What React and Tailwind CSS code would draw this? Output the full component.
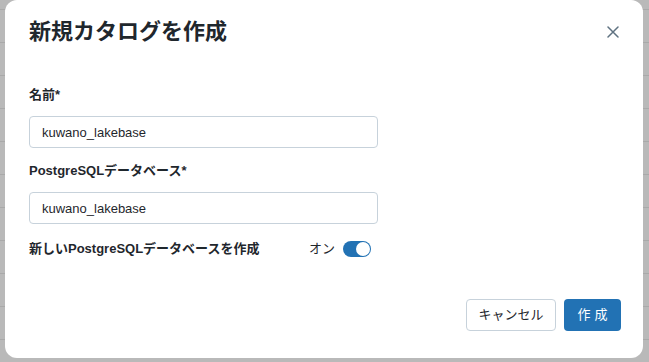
import { useState } from 'react';

const ROWS = Array.from({ length: 12 }, (_, i) => i);

function CloseIcon() {
  return (
    <svg width="12" height="12" viewBox="0 0 12 12" fill="none">
      <path d="M1 1L11 11M11 1L1 11" stroke="#5f7281" strokeWidth="1.5" strokeLinecap="round" />
    </svg>
  );
}

function Field({ label, value }) {
  return (
    <div>
      <label className="block h-5 leading-5 text-[13px] font-bold text-[#1f272d]">{label}</label>
      <input
        readOnly
        value={value}
        className="mt-[11px] block w-[349px] h-8 rounded-[4px] border border-[#c7d2db] px-3 text-[13px] text-[#1f272d] outline-none"
      />
    </div>
  );
}

export default function App() {
  const [on, setOn] = useState(true);

  return (
    <div
      className="relative w-[649px] h-[362px] overflow-hidden bg-[#b9b9b9]"
      style={{ fontFamily: '"Liberation Sans", "Noto Sans CJK JP", sans-serif' }}
    >
      <div className="pt-[9px]">
        {ROWS.map((i) => (
          <div key={i} className="h-[33px] border-t border-[#a9a9a9]" />
        ))}
      </div>

      <div className="absolute left-[5px] top-0 w-[638px] h-[358px] rounded-[12px] bg-white pl-6 pr-[22px] pt-[20px]">
        <div className="h-6 flex items-center justify-between">
          <h1 className="text-[22px] leading-6 font-bold text-[#1f272d]">新規カタログを作成</h1>
          <button className="w-4 h-4 flex items-center justify-center">
            <CloseIcon />
          </button>
        </div>

        <div className="mt-[41px]">
          <Field label="名前*" value="kuwano_lakebase" />
          <div className="mt-[13px]">
            <Field label="PostgreSQLデータベース*" value="kuwano_lakebase" />
          </div>

          <div className="mt-[15px] h-5 w-[342px] flex items-center justify-between">
            <span className="text-[13px] font-bold text-[#1f272d]">新しいPostgreSQLデータベースを作成</span>
            <div className="flex items-center gap-2">
              <span className="text-[13px] text-[#1f272d]">オン</span>
              <button
                onClick={() => setOn(!on)}
                className="w-7 h-4 rounded-full bg-[#2272b4] p-[1px] flex items-center justify-end"
              >
                <span className="w-[14px] h-[14px] rounded-full bg-white" />
              </button>
            </div>
          </div>
        </div>

        <div className="mt-[40px] flex justify-end gap-2">
          <button className="w-[90px] h-8 rounded-[4px] border border-[#c7d2db] bg-white text-[13px] text-[#1f272d]">
            キャンセル
          </button>
          <button className="w-[57px] h-8 rounded-[4px] bg-[#2272b4] text-[13px] text-white tracking-[0.3em] pl-[0.3em]">
            作成
          </button>
        </div>
      </div>
    </div>
  );
}
